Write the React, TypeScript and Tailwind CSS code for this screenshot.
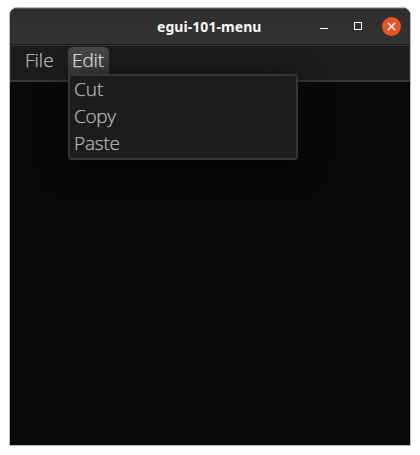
const entries = [
  { label: 'Cut', style: 'tracking-[0px]' },
  { label: 'Copy', style: 'tracking-[-0.3px]' },
  { label: 'Paste', style: 'tracking-[-0.2px]' },
];

function TitleBar() {
  return (
    <header className="flex h-[37px] shrink-0 items-center border-t border-b border-t-[#555353] border-b-[#1c1b1b] bg-linear-to-b from-[#302e2e] to-[#343132] pr-[9px] pl-[147px]">
      <h1 className="w-[107px] font-['Noto_Sans','Open_Sans',sans-serif] text-[14px] leading-5 font-bold tracking-[0.06px] whitespace-nowrap text-[#f7f7f7]">
        egui-101-menu
      </h1>
      <div className="mb-px ml-auto flex items-center">
        <button aria-label="Minimize" className="mt-[4px] mr-[26px] h-px w-2 bg-white" />
        <button aria-label="Maximize" className="mr-[20px] h-2 w-2 border border-white" />
        <button aria-label="Close" className="flex h-[19px] w-[19px] items-center justify-center rounded-full bg-[#e95420]">
          <svg width="9" height="9" viewBox="0 0 9 9" stroke="white" strokeWidth="1.4">
            <path d="M.8 .8 8.2 8.2M8.2 .8 .8 8.2" />
          </svg>
        </button>
      </div>
    </header>
  );
}

export default function App() {
  return (
    <main className="h-[455px] w-[420px] bg-white pt-[7px] pl-[9px] font-['Open_Sans','Noto_Sans',sans-serif]">
      <section className="flex h-[439px] w-[402px] flex-col overflow-hidden rounded-t-[8px] border border-[#b9b9b7] bg-[#090909]">
        <TitleBar />
        <nav className="flex h-[37px] shrink-0 border border-b-2 border-[#363636] bg-[#1c1c1c] pl-[10px] text-[19px] leading-[27px] font-light text-[#b8b8b8] [-webkit-text-stroke:0.25px_currentColor]">
          <button className="mt-px h-[27px] w-[38px] pl-1 text-left tracking-[0px]">File</button>
          <div className="relative ml-[9px] pt-px">
            <button className="h-[30px] w-[41px] rounded-t-[5px] bg-linear-to-b from-[#484848] to-[#3a3a3a] pb-[3px] pl-1 text-left tracking-[-0.1px] text-[#e4e4e4]">
              Edit
            </button>
            <div className="absolute top-[28px] left-0 h-[86px] w-[230px] rounded-[4px] border-2 border-[#363636] bg-[#1c1c1c] pl-1 shadow-[0_6px_30px_rgba(0,0,0,0.7)]">
              {entries.map(({ label, style }) => (
                <button key={label} className={`block h-[27px] w-full text-left ${style}`}>
                  {label}
                </button>
              ))}
            </div>
          </div>
        </nav>
      </section>
    </main>
  );
}
